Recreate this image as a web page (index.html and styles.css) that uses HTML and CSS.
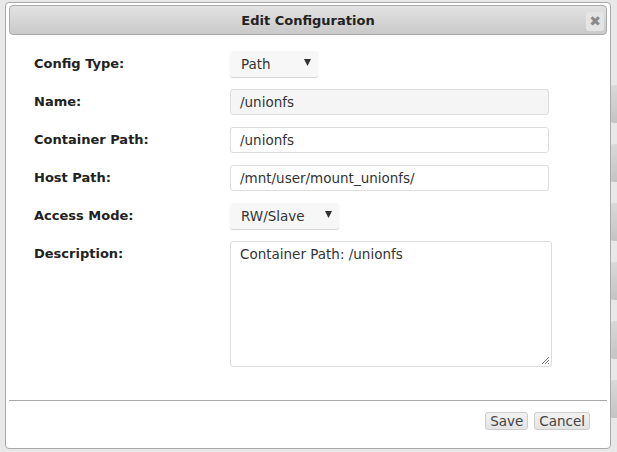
FILE: index.html
```html
<!DOCTYPE html>
<html>
<head>
<meta charset="utf-8">
<link rel="stylesheet" href="styles.css">
</head>
<body>
<div class="backdrop">
  <div class="tab"></div>
  <div class="tab"></div>
  <div class="tab"></div>
  <div class="tab"></div>
  <div class="tab"></div>
  <div class="tab"></div>
</div>
<div class="dialog">
  <div class="titlebar">
    <span class="title">Edit Configuration</span>
    <button class="close" type="button">&#x2716;</button>
  </div>
  <div class="form">
    <label class="lbl">Config Type:</label>
    <div class="select sel-type"><span>Path</span><svg class="arrow" width="7" height="7" viewBox="0 0 7 7"><polygon points="0,0 7,0 3.5,7" fill="#333"/></svg></div>

    <label class="lbl">Name:</label>
    <div class="input readonly">/unionfs</div>

    <label class="lbl">Container Path:</label>
    <div class="input">/unionfs</div>

    <label class="lbl">Host Path:</label>
    <div class="input">/mnt/user/mount_unionfs/</div>

    <label class="lbl">Access Mode:</label>
    <div class="select sel-mode"><span>RW/Slave</span><svg class="arrow" width="7" height="7" viewBox="0 0 7 7"><polygon points="0,0 7,0 3.5,7" fill="#333"/></svg></div>

    <label class="lbl">Description:</label>
    <div class="textarea">Container Path: /unionfs<svg class="grip" width="9" height="9" viewBox="0 0 9 9"><path d="M8 1 L1 8 M8 4 L4 8 M8 7 L7 8" stroke="#777" stroke-width="1"/></svg></div>
  </div>
  <div class="buttons">
    <button class="btn" type="button">Save</button>
    <button class="btn" type="button">Cancel</button>
  </div>
</div>
</body>
</html>
```
FILE: styles.css
```css
html, body {
  margin: 0;
  padding: 0;
}
body {
  width: 617px;
  height: 452px;
  background: #e8e8e8;
  font-family: "DejaVu Sans", sans-serif;
  font-size: 13px;
  color: #222;
  position: relative;
  overflow: hidden;
}
.backdrop {
  display: flex;
  flex-direction: column;
  gap: 21px;
  padding-top: 85px;
  margin-left: 608px;
}
.tab {
  height: 38px;
  border-radius: 6px 0 0 6px;
  background: linear-gradient(#d9d9d9, #c4c4c4);
}
.dialog {
  position: absolute;
  left: 5px;
  top: 2px;
  width: 598px;
  height: 443px;
  background: #fff;
  border: 1px solid #a9a9a9;
  border-radius: 4px;
  padding: 2px 3px 0 3px;
  display: flex;
  flex-direction: column;
}
.titlebar {
  height: 28px;
  flex: none;
  border: 1px solid #a9a9a9;
  border-radius: 4px;
  background: linear-gradient(#e2e2e2, #c9c9c9);
  display: flex;
  align-items: center;
  justify-content: center;
  position: relative;
}
.title {
  font-weight: bold;
  font-size: 13px;
  color: #222;
}
.close {
  position: absolute;
  right: 2px;
  top: 6px;
  width: 18px;
  height: 19px;
  padding: 0;
  border: none;
  border-radius: 3px;
  background: #e4e4e4;
  color: #8a8a8a;
  font-size: 14px;
  font-weight: bold;
  font-family: "DejaVu Sans", sans-serif;
  line-height: 19px;
}
.form {
  display: grid;
  grid-template-columns: 196px 1fr;
  row-gap: 12px;
  padding: 16px 0 0 25px;
  height: 366px;
  flex: none;
  box-sizing: border-box;
  align-content: start;
  border-bottom: 1px solid #aaa;
}
.lbl {
  font-weight: bold;
  line-height: 26px;
  color: #222;
}
.input {
  width: 319px;
  height: 26px;
  box-sizing: border-box;
  border: 1px solid #ddd;
  border-radius: 3px;
  padding: 0 9px;
  line-height: 24px;
  font-size: 13.5px;
  color: #333;
  background: #fff;
}
.input.readonly {
  background: #f5f5f5;
}
.select {
  height: 26px;
  box-sizing: border-box;
  border-radius: 3px;
  background: #f7f7f7;
  box-shadow: 0 1px 1px rgba(0,0,0,0.18);
  display: flex;
  align-items: center;
  justify-content: space-between;
  padding: 0 7px 0 11px;
  font-size: 13.5px;
  color: #333;
}
.select .arrow {
  margin-top: -3px;
}
.sel-type { width: 88px; }
.sel-mode { width: 109px; }
.textarea {
  width: 322px;
  height: 126px;
  box-sizing: border-box;
  border: 1px solid #ddd;
  border-radius: 3px;
  padding: 4px 9px;
  line-height: 17px;
  font-size: 13.5px;
  color: #333;
  position: relative;
}
.grip {
  position: absolute;
  right: 1px;
  bottom: 1px;
}
.buttons {
  display: flex;
  justify-content: flex-end;
  gap: 6px;
  padding: 11px 17px 0 0;
}
.btn {
  height: 18px;
  padding: 0 4px;
  border: 1px solid #ccc;
  border-radius: 3px;
  background: linear-gradient(#f2f2f2, #e4e4e4);
  color: #444;
  font-family: "DejaVu Sans", sans-serif;
  font-size: 13.5px;
  line-height: 16px;
}
```
